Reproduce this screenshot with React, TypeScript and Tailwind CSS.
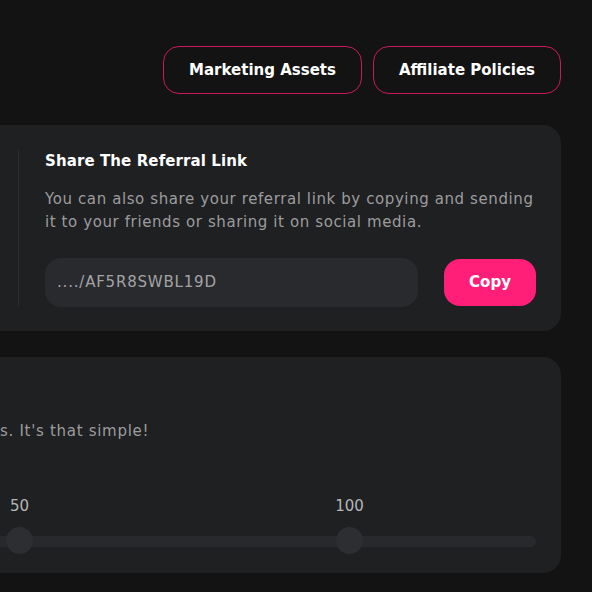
import { useState } from 'react'

const font = { fontFamily: '"DejaVu Sans", "Open Sans", sans-serif' }

export default function App() {
  const [copied, setCopied] = useState(false)
  const link = '..../AF5R8SWBL19D'

  return (
    <div className="w-full h-[592px] overflow-hidden bg-[#131313] text-white" style={font}>
      <div className="ml-[-340px] mr-[31px] pt-[46px] flex flex-col">
        {/* Header actions */}
        <div className="flex justify-end gap-[11px]">
          <button className="w-[199px] h-[48px] rounded-2xl border border-[#c9195d] text-[15px] font-bold text-white">
            Marketing Assets
          </button>
          <button className="w-[188px] h-[48px] rounded-2xl border border-[#c9195d] text-[15px] font-bold text-white">
            Affiliate Policies
          </button>
        </div>

        {/* Referral card */}
        <div className="mt-[31px] h-[206px] rounded-[18px] bg-[#1f2022] flex py-[25px]">
          <div className="w-[358px] shrink-0" />
          <div className="flex-1 border-l border-[#2c2d30] pl-[26px] pr-[25px] flex flex-col">
            <h3 className="text-[15px] leading-[20px] font-bold text-white tracking-[0.1px] mt-[1px]">Share The Referral Link</h3>
            <p className="mt-[17px] text-[15px] leading-[23px] text-[#9c9c9e] tracking-[0.6px] whitespace-nowrap">
              You can also share your referral link by copying and sending
              <br />
              it to your friends or sharing it on social media.
            </p>
            <div className="mt-[24px] flex items-center gap-[26px]">
              <div className="w-[373px] h-[49px] rounded-2xl bg-[#292a2d] px-[12px] flex items-center text-[15px] text-[#a3a3a5] tracking-[0.8px]">
                {link}
              </div>
              <button
                onClick={() => setCopied(true)}
                className="w-[92px] h-[47px] rounded-2xl bg-[#ff1f78] text-[15px] font-bold text-white"
              >
                {copied ? 'Copied' : 'Copy'}
              </button>
            </div>
          </div>
        </div>

        {/* Earnings card */}
        <div className="mt-[26px] h-[216px] rounded-[18px] bg-[#1f2022] pl-[16px] pr-[25px] pt-[63px] flex flex-col">
          <p className="pl-[10px] text-[15px] leading-[23px] text-[#9c9c9e] whitespace-nowrap tracking-[0.7px]">
            Earn a reward on all referrals' bookings. It's that simple!
          </p>
          <div className="mt-[53px] w-[687px] flex justify-between text-[15px] leading-[20px] text-[#b5b5b7]">
            <span className="w-[27px] flex justify-center whitespace-nowrap">0</span>
            <span className="w-[27px] flex justify-center whitespace-nowrap">50</span>
            <span className="w-[27px] flex justify-center whitespace-nowrap">100</span>
          </div>
          <div className="mt-[11px] relative h-[27px] flex items-center">
            <div className="w-full h-[11px] mt-[2px] rounded-full bg-[#28292c]" />
            <div className="absolute inset-0 w-[687px] flex justify-between items-center">
              <span className="w-[27px] h-[27px] rounded-full bg-[#2d2e31]" />
              <span className="w-[27px] h-[27px] rounded-full bg-[#2d2e31]" />
              <span className="w-[27px] h-[27px] rounded-full bg-[#2d2e31]" />
            </div>
          </div>
        </div>
      </div>
    </div>
  )
}
